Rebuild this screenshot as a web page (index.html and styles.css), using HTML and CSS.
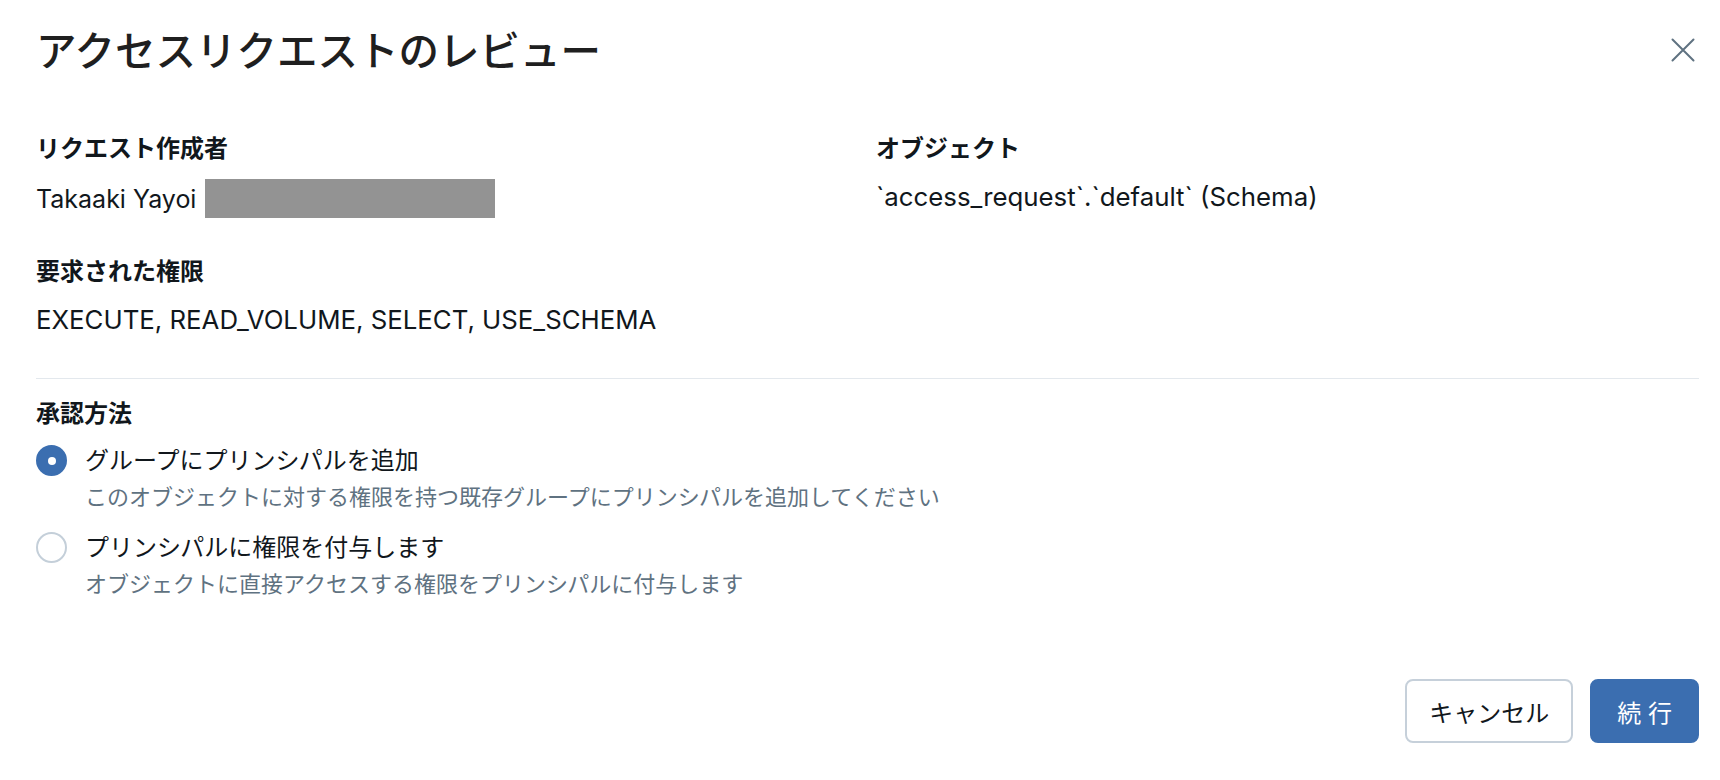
FILE: index.html
```html
<!DOCTYPE html>
<html lang="ja">
<head>
<meta charset="utf-8">
<title>アクセスリクエストのレビュー</title>
<link rel="stylesheet" href="styles.css">
</head>
<body>
<div class="modal">
  <header class="modal-header">
    <h1 class="modal-title">アクセスリクエストのレビュー</h1>
    <button class="close-btn" aria-label="閉じる">
      <svg width="24" height="24" viewBox="0 0 24 24" fill="none" stroke="#5f7281" stroke-width="2" stroke-linecap="round">
        <path d="M1.5 1.5 L22.5 22.5 M22.5 1.5 L1.5 22.5"/>
      </svg>
    </button>
  </header>

  <div class="fields">
    <div class="field">
      <div class="field-label">リクエスト作成者</div>
      <div class="field-value requester"><span class="latin name">Takaaki Yayoi (</span><span class="redact"></span></div>
    </div>
    <div class="field">
      <div class="field-label">オブジェクト</div>
      <div class="field-value latin">`access_request`.`default` (Schema)</div>
    </div>
    <div class="field">
      <div class="field-label">要求された権限</div>
      <div class="field-value latin">EXECUTE, READ_VOLUME, SELECT, USE_SCHEMA</div>
    </div>
  </div>

  <hr class="divider">

  <div class="approval">
    <div class="field-label">承認方法</div>
    <div class="options">
      <label class="option">
        <span class="radio checked"></span>
        <span class="option-text">
          <span class="option-title">グループにプリンシパルを追加</span>
          <span class="option-desc">このオブジェクトに対する権限を持つ既存グループにプリンシパルを追加してください</span>
        </span>
      </label>
      <label class="option">
        <span class="radio"></span>
        <span class="option-text">
          <span class="option-title">プリンシパルに権限を付与します</span>
          <span class="option-desc">オブジェクトに直接アクセスする権限をプリンシパルに付与します</span>
        </span>
      </label>
    </div>
  </div>

  <footer class="modal-footer">
    <button class="btn btn-default">キャンセル</button>
    <button class="btn btn-primary">続 行</button>
  </footer>
</div>
</body>
</html>
```

FILE: styles.css
```css
* {
  box-sizing: border-box;
}

html, body {
  margin: 0;
  padding: 0;
  background: #ffffff;
}

body {
  font-family: "Inter", "Noto Sans CJK JP", sans-serif;
  font-size: 24px;
  color: #11171c;
}

.modal {
  width: 1720px;
  padding: 24px 21px 0 36px;
}

.modal-header {
  display: flex;
  align-items: center;
  justify-content: space-between;
  height: 56px;
}

.modal-title {
  margin: 0;
  font-size: 40.5px;
  line-height: 56px;
  font-weight: 500;
  color: #1f1f1f;
  letter-spacing: 0;
}

.close-btn {
  width: 32px;
  height: 32px;
  padding: 0;
  margin-top: -4px;
  border: none;
  background: transparent;
  display: flex;
  align-items: center;
  justify-content: center;
  cursor: pointer;
}

.fields {
  margin-top: 51px;
  display: grid;
  grid-template-columns: 1fr 1fr;
  column-gap: 17px;
  row-gap: 36px;
}

.field-label {
  font-weight: 700;
  line-height: 36px;
  font-size: 24px;
}

.field-value {
  margin-top: 12px;
  line-height: 36px;
}

.latin {
  font-size: 25.8px;
}

.latin.name {
  font-size: 25px;
}

.requester {
  display: flex;
  align-items: center;
}

.redact {
  display: inline-block;
  width: 290px;
  height: 39px;
  margin-left: -8px;
  background: #939393;
}

.divider {
  margin: 40px 0 0;
  border: none;
  height: 1px;
  background: #e3e8ed;
}

.approval {
  margin-top: 17px;
}

.options {
  margin-top: 11px;
  display: flex;
  flex-direction: column;
  gap: 17px;
}

.option {
  display: flex;
  align-items: flex-start;
  gap: 18px;
}

.radio {
  flex: none;
  width: 31px;
  height: 31px;
  margin-top: 2px;
  border-radius: 50%;
  border: 2px solid #c4cfd9;
  background: #ffffff;
  display: flex;
  align-items: center;
  justify-content: center;
}

.radio.checked {
  border-color: #3b6eb0;
  background: #3b6eb0;
}

.radio.checked::after {
  content: "";
  width: 8px;
  height: 8px;
  border-radius: 50%;
  background: #ffffff;
}

.option-text {
  display: flex;
  flex-direction: column;
}

.option-title {
  line-height: 36px;
}

.option-desc {
  margin-top: 2px;
  font-size: 22px;
  line-height: 32px;
  color: #5f7281;
}

.modal-footer {
  margin-top: 79px;
  display: flex;
  justify-content: flex-end;
  gap: 17px;
}

.btn {
  height: 64px;
  font-family: inherit;
  font-size: 24px;
  border-radius: 8px;
  cursor: pointer;
}

.btn-default {
  padding: 0 22px;
  border: 2px solid #c6d0da;
  background: #ffffff;
  color: #11171c;
}

.btn-primary {
  padding: 0 25px;
  border: 2px solid #3b6eb0;
  background: #3b6eb0;
  color: #ffffff;
}
```
